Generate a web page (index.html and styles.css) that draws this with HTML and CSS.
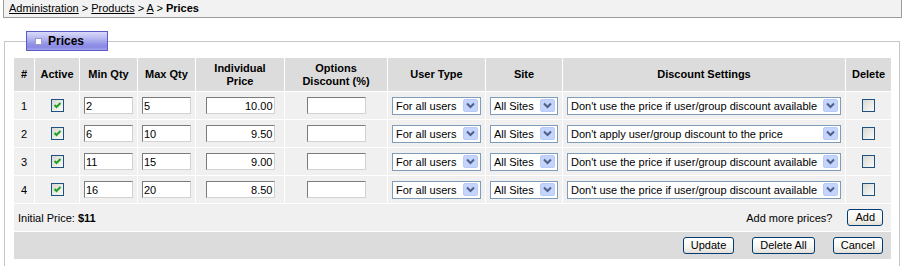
FILE: index.html
```html
<!DOCTYPE html>
<html>
<head>
<meta charset="utf-8">
<title>Prices</title>
<link rel="stylesheet" href="styles.css">
</head>
<body>
<div class="crumbs"><a href="#">Administration</a> &gt; <a href="#">Products</a> &gt; <a href="#">A</a> &gt; <b>Prices</b></div>
<fieldset class="panel">
  <legend class="panel-title"><span class="panel-icon"></span>Prices</legend>
  <table class="grid">
    <colgroup>
      <col style="width:20px"><col style="width:44px"><col style="width:57px"><col style="width:57px"><col style="width:88px"><col style="width:102px"><col style="width:97px"><col style="width:76px"><col style="width:282px"><col style="width:45px">
    </colgroup>
    <thead>
      <tr><th>#</th><th>Active</th><th>Min Qty</th><th>Max Qty</th><th>Individual<br>Price</th><th>Options<br>Discount (%)</th><th>User Type</th><th>Site</th><th>Discount Settings</th><th>Delete</th></tr>
    </thead>
    <tbody>
      <tr>
        <td>1</td>
        <td><span class="cb"><svg class="tick" width="11" height="11" viewBox="0 0 11 11"><path d="M2.5 5 L4.5 7 L8.5 3" fill="none" stroke="#21a121" stroke-width="2"/></svg></span></td>
        <td><input class="field" value="2"></td>
        <td><input class="field" value="5"></td>
        <td><input class="field price" value="10.00"></td>
        <td><input class="field opt" value=""></td>
        <td><span class="select w-user"><select><option>For all users</option></select><svg class="arrow" width="15" height="13" viewBox="0 0 15 13"><rect x="0.5" y="0.5" width="14" height="12" rx="1.5" fill="#c4d4fc" stroke="#b8cbf6"/><path d="M4 4.5 L7.5 8 L11 4.5" fill="none" stroke="#4d6185" stroke-width="2"/></svg></span></td>
        <td><span class="select w-site"><select><option>All Sites</option></select><svg class="arrow" width="15" height="13" viewBox="0 0 15 13"><rect x="0.5" y="0.5" width="14" height="12" rx="1.5" fill="#c4d4fc" stroke="#b8cbf6"/><path d="M4 4.5 L7.5 8 L11 4.5" fill="none" stroke="#4d6185" stroke-width="2"/></svg></span></td>
        <td><span class="select w-disc"><select><option>Don't use the price if user/group discount available</option></select><svg class="arrow" width="15" height="13" viewBox="0 0 15 13"><rect x="0.5" y="0.5" width="14" height="12" rx="1.5" fill="#c4d4fc" stroke="#b8cbf6"/><path d="M4 4.5 L7.5 8 L11 4.5" fill="none" stroke="#4d6185" stroke-width="2"/></svg></span></td>
        <td><span class="cb"></span></td>
      </tr>
      <tr>
        <td>2</td>
        <td><span class="cb"><svg class="tick" width="11" height="11" viewBox="0 0 11 11"><path d="M2.5 5 L4.5 7 L8.5 3" fill="none" stroke="#21a121" stroke-width="2"/></svg></span></td>
        <td><input class="field" value="6"></td>
        <td><input class="field" value="10"></td>
        <td><input class="field price" value="9.50"></td>
        <td><input class="field opt" value=""></td>
        <td><span class="select w-user"><select><option>For all users</option></select><svg class="arrow" width="15" height="13" viewBox="0 0 15 13"><rect x="0.5" y="0.5" width="14" height="12" rx="1.5" fill="#c4d4fc" stroke="#b8cbf6"/><path d="M4 4.5 L7.5 8 L11 4.5" fill="none" stroke="#4d6185" stroke-width="2"/></svg></span></td>
        <td><span class="select w-site"><select><option>All Sites</option></select><svg class="arrow" width="15" height="13" viewBox="0 0 15 13"><rect x="0.5" y="0.5" width="14" height="12" rx="1.5" fill="#c4d4fc" stroke="#b8cbf6"/><path d="M4 4.5 L7.5 8 L11 4.5" fill="none" stroke="#4d6185" stroke-width="2"/></svg></span></td>
        <td><span class="select w-disc"><select><option>Don't apply user/group discount to the price</option></select><svg class="arrow" width="15" height="13" viewBox="0 0 15 13"><rect x="0.5" y="0.5" width="14" height="12" rx="1.5" fill="#c4d4fc" stroke="#b8cbf6"/><path d="M4 4.5 L7.5 8 L11 4.5" fill="none" stroke="#4d6185" stroke-width="2"/></svg></span></td>
        <td><span class="cb"></span></td>
      </tr>
      <tr>
        <td>3</td>
        <td><span class="cb"><svg class="tick" width="11" height="11" viewBox="0 0 11 11"><path d="M2.5 5 L4.5 7 L8.5 3" fill="none" stroke="#21a121" stroke-width="2"/></svg></span></td>
        <td><input class="field" value="11"></td>
        <td><input class="field" value="15"></td>
        <td><input class="field price" value="9.00"></td>
        <td><input class="field opt" value=""></td>
        <td><span class="select w-user"><select><option>For all users</option></select><svg class="arrow" width="15" height="13" viewBox="0 0 15 13"><rect x="0.5" y="0.5" width="14" height="12" rx="1.5" fill="#c4d4fc" stroke="#b8cbf6"/><path d="M4 4.5 L7.5 8 L11 4.5" fill="none" stroke="#4d6185" stroke-width="2"/></svg></span></td>
        <td><span class="select w-site"><select><option>All Sites</option></select><svg class="arrow" width="15" height="13" viewBox="0 0 15 13"><rect x="0.5" y="0.5" width="14" height="12" rx="1.5" fill="#c4d4fc" stroke="#b8cbf6"/><path d="M4 4.5 L7.5 8 L11 4.5" fill="none" stroke="#4d6185" stroke-width="2"/></svg></span></td>
        <td><span class="select w-disc"><select><option>Don't use the price if user/group discount available</option></select><svg class="arrow" width="15" height="13" viewBox="0 0 15 13"><rect x="0.5" y="0.5" width="14" height="12" rx="1.5" fill="#c4d4fc" stroke="#b8cbf6"/><path d="M4 4.5 L7.5 8 L11 4.5" fill="none" stroke="#4d6185" stroke-width="2"/></svg></span></td>
        <td><span class="cb"></span></td>
      </tr>
      <tr>
        <td>4</td>
        <td><span class="cb"><svg class="tick" width="11" height="11" viewBox="0 0 11 11"><path d="M2.5 5 L4.5 7 L8.5 3" fill="none" stroke="#21a121" stroke-width="2"/></svg></span></td>
        <td><input class="field" value="16"></td>
        <td><input class="field" value="20"></td>
        <td><input class="field price" value="8.50"></td>
        <td><input class="field opt" value=""></td>
        <td><span class="select w-user"><select><option>For all users</option></select><svg class="arrow" width="15" height="13" viewBox="0 0 15 13"><rect x="0.5" y="0.5" width="14" height="12" rx="1.5" fill="#c4d4fc" stroke="#b8cbf6"/><path d="M4 4.5 L7.5 8 L11 4.5" fill="none" stroke="#4d6185" stroke-width="2"/></svg></span></td>
        <td><span class="select w-site"><select><option>All Sites</option></select><svg class="arrow" width="15" height="13" viewBox="0 0 15 13"><rect x="0.5" y="0.5" width="14" height="12" rx="1.5" fill="#c4d4fc" stroke="#b8cbf6"/><path d="M4 4.5 L7.5 8 L11 4.5" fill="none" stroke="#4d6185" stroke-width="2"/></svg></span></td>
        <td><span class="select w-disc"><select><option>Don't use the price if user/group discount available</option></select><svg class="arrow" width="15" height="13" viewBox="0 0 15 13"><rect x="0.5" y="0.5" width="14" height="12" rx="1.5" fill="#c4d4fc" stroke="#b8cbf6"/><path d="M4 4.5 L7.5 8 L11 4.5" fill="none" stroke="#4d6185" stroke-width="2"/></svg></span></td>
        <td><span class="cb"></span></td>
      </tr>
    </tbody>
    <tfoot>
      <tr class="foot">
        <td colspan="10">
          <div class="foot-bar">
            <span>Initial Price: <b>$11</b></span>
            <span class="more">Add more prices?</span>
            <button class="btn" type="button">Add</button>
          </div>
        </td>
      </tr>
      <tr class="actions">
        <td colspan="10">
          <div class="actions-bar">
            <button class="btn" type="button">Update</button>
            <button class="btn" type="button">Delete All</button>
            <button class="btn" type="button">Cancel</button>
          </div>
        </td>
      </tr>
    </tfoot>
  </table>
</fieldset>
</body>
</html>
```
FILE: styles.css
```css
html, body {
  margin: 0;
  padding: 0;
  background: #fff;
}
body {
  font: 11px "Liberation Sans", Arial, sans-serif;
  color: #000;
}
.crumbs {
  margin: 0 2px 0 3px;
  height: 17px;
  line-height: 17px;
  padding-left: 5px;
  background: #f2f2f2;
  border: 1px solid #9c9c9c;
  border-top: 0;
}
.crumbs a {
  color: #000;
  text-decoration: underline;
}
.panel {
  margin: 13px 4px 0 4px;
  padding: 6px 7px 10px 8px;
  border: 1px solid #c6c6c6;
  min-width: 0;
}
.panel-title {
  box-sizing: border-box;
  width: 82px;
  height: 20px;
  margin-left: 13px;
  padding: 0 0 0 8px;
  border: 1px solid #5a5ac6;
  background: linear-gradient(#dadaf9 0%, #b8b8f1 35%, #9090e6 70%, #8a8ae4 85%, #a4a4ec 100%);
  font-weight: bold;
  font-size: 12px;
  line-height: 18px;
  white-space: nowrap;
}
.panel-icon {
  display: inline-block;
  box-sizing: border-box;
  width: 7px;
  height: 7px;
  margin-right: 6px;
  border: 1px solid #9a9ac8;
  background: #fff;
  vertical-align: 0;
}
.grid {
  width: 100%;
  table-layout: fixed;
  border-spacing: 1px;
  background: #fff;
}
.grid th {
  height: 33px;
  padding: 0;
  background: #dcdcdc;
  font-weight: bold;
  line-height: 13px;
  text-align: center;
  vertical-align: middle;
}
.grid td {
  height: 27px;
  padding: 0;
  background: #f0f0f0;
  text-align: center;
  vertical-align: middle;
}
.field {
  box-sizing: border-box;
  width: 49px;
  height: 17px;
  margin: 0;
  padding: 0 1px;
  border: 1px solid;
  border-color: #7b7b7b #d2d2d2 #d2d2d2 #7b7b7b;
  background: #fff;
  font: 11px "Liberation Sans", Arial, sans-serif;
  color: #000;
  vertical-align: middle;
}
.field.price {
  width: 69px;
  text-align: right;
}
.field.opt {
  width: 59px;
}
.select {
  display: inline-flex;
  align-items: center;
  box-sizing: border-box;
  height: 18px;
  border: 1px solid #7f9db9;
  background: #fff;
  vertical-align: middle;
  text-align: left;
}
.select select {
  appearance: none;
  -webkit-appearance: none;
  flex: 1;
  min-width: 0;
  height: 16px;
  margin: 0;
  padding: 0 0 0 3px;
  border: 0;
  background: transparent;
  font: 11px "Liberation Sans", Arial, sans-serif;
  color: #000;
}
.select .arrow {
  flex: none;
  margin-right: 2px;
}
.w-user { width: 89px; }
.w-site { width: 68px; }
.w-disc { width: 274px; }
.cb {
  display: inline-block;
  box-sizing: border-box;
  width: 13px;
  height: 13px;
  border: 1px solid #1c5180;
  background: linear-gradient(135deg, #d8d8d2, #fafafa);
  vertical-align: -3px;
}
.cb .tick {
  display: block;
}
.grid tfoot td {
  text-align: left;
}
.foot-bar {
  display: flex;
  align-items: center;
  padding: 0 8px 0 4px;
}
.foot-bar .more {
  margin-left: auto;
  margin-right: 15px;
}
.grid tr.actions td {
  background: #dcdcdc;
}
.actions-bar {
  display: flex;
  justify-content: flex-end;
  align-items: center;
  gap: 18px;
  padding-right: 8px;
}
.btn {
  box-sizing: border-box;
  height: 17px;
  margin: 0;
  padding: 0 7px;
  border: 1px solid #003c74;
  border-radius: 3px;
  background: linear-gradient(#ffffff, #f5f5f1 60%, #e2e0d8);
  font: 11px "Liberation Sans", Arial, sans-serif;
  line-height: 15px;
  color: #000;
}
```
